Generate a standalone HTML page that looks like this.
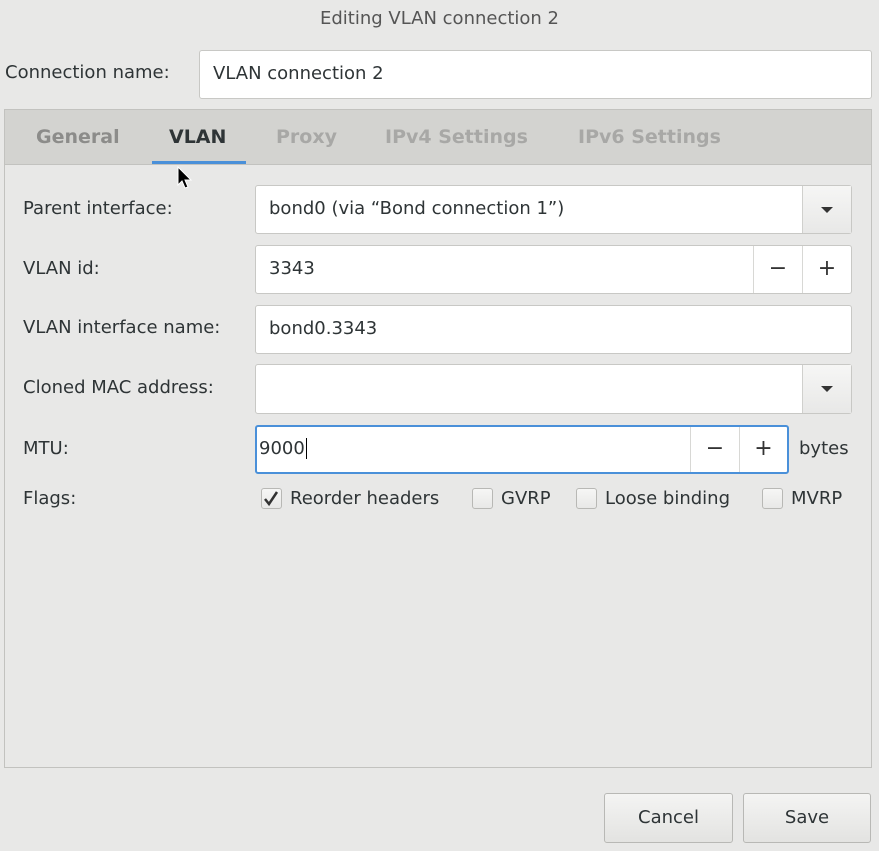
<!DOCTYPE html>
<html><head><style>
body{margin:0;width:879px;height:851px;background:#e8e8e7;font-family:"DejaVu Sans","Liberation Sans",sans-serif;font-size:18px;color:#2e3436;position:relative;overflow:hidden}
.a{position:absolute}
.t{position:absolute;white-space:nowrap;line-height:20px}
.e{position:absolute;background:#fff;border:1px solid #c8c8c5;border-radius:3px;box-sizing:border-box}
.btn{position:absolute;border-left:1px solid #d8d8d5;box-sizing:border-box;text-align:center;font-size:22px;color:#333}
.cb{position:absolute;width:21px;height:21px;border:1px solid #b8b8b5;border-radius:3px;background:linear-gradient(#f6f6f5,#e8e8e7);box-sizing:border-box}
.pb{position:absolute;border:1px solid #b8b8b5;border-radius:3px;background:linear-gradient(#f4f4f3,#e3e3e1);box-sizing:border-box;text-align:center;line-height:48px;font-size:18px}
.tab{position:absolute;white-space:nowrap;line-height:20px;font-weight:bold;font-size:19px}
</style></head><body>
<div class="t" style="left:0;width:879px;text-align:center;top:9px;color:#555">Editing VLAN connection 2</div>
<div class="t" style="left:5px;top:63px">Connection name:</div>
<div class="e" style="left:199px;top:50px;width:673px;height:49px"><div class="t" style="left:13px;top:13px">VLAN connection 2</div></div>
<div class="a" style="left:4px;top:109px;width:868px;height:659px;border:1px solid #c2c2bf;box-sizing:border-box;background:#e8e8e7"></div>
<div class="a" style="left:5px;top:110px;width:866px;height:54px;background:#d3d3d0;border-bottom:1px solid #c2c2bf"></div>
<div class="tab" style="left:36px;top:127px;color:#8c8c8a">General</div>
<div class="tab" style="left:169px;top:127px;color:#2e3436">VLAN</div>
<div class="tab" style="left:276px;top:127px;color:#a8a8a6">Proxy</div>
<div class="tab" style="left:385px;top:127px;color:#a8a8a6">IPv4 Settings</div>
<div class="tab" style="left:578px;top:127px;color:#a8a8a6">IPv6 Settings</div>
<div class="a" style="left:152px;top:161px;width:94px;height:3px;background:#4a90d9"></div>
<svg class="a" style="left:176px;top:166px" width="18" height="26" viewBox="0 0 18 26"><path d="M2 1 L2 19 L6 15 L9 22 L12 21 L9 14 L15 14 Z" fill="#000" stroke="#fff" stroke-width="1"/></svg>

<div class="t" style="left:23px;top:199px">Parent interface:</div>
<div class="e" style="left:255px;top:185px;width:597px;height:49px"><div class="t" style="left:13px;top:13px">bond0 (via “Bond connection 1”)</div>
<div class="a" style="right:0;top:0;width:48px;height:47px;border-left:1px solid #d0d0cd;background:linear-gradient(#f6f6f5,#e8e8e7)"><svg class="a" style="left:18px;top:20px" width="12" height="8"><path d="M0 1 L12 1 L6 7Z" fill="#333"/></svg></div></div>

<div class="t" style="left:23px;top:259px">VLAN id:</div>
<div class="e" style="left:255px;top:245px;width:597px;height:49px"><div class="t" style="left:13px;top:13px">3343</div>
<div class="btn" style="left:497px;top:0;width:49px;height:47px;line-height:46px">−</div>
<div class="btn" style="left:546px;top:0;width:49px;height:47px;line-height:46px">+</div></div>

<div class="t" style="left:23px;top:318px">VLAN interface name:</div>
<div class="e" style="left:255px;top:305px;width:597px;height:49px"><div class="t" style="left:13px;top:13px">bond0.3343</div></div>

<div class="t" style="left:23px;top:378px">Cloned MAC address:</div>
<div class="e" style="left:255px;top:364px;width:597px;height:50px">
<div class="a" style="right:0;top:0;width:48px;height:48px;border-left:1px solid #d0d0cd;background:linear-gradient(#f6f6f5,#e8e8e7)"><svg class="a" style="left:18px;top:20px" width="12" height="8"><path d="M0 1 L12 1 L6 7Z" fill="#333"/></svg></div></div>

<div class="t" style="left:23px;top:439px">MTU:</div>
<div class="e" style="left:255px;top:425px;width:534px;height:49px;border:2px solid #4a90d9"><div class="t" style="left:2px;top:12px">9000<span style="border-left:1px solid #000;margin-left:1px"></span></div>
<div class="btn" style="left:433px;top:0;width:49px;height:45px;line-height:44px">−</div>
<div class="btn" style="left:482px;top:0;width:48px;height:45px;line-height:44px">+</div></div>
<div class="t" style="left:799px;top:439px">bytes</div>

<div class="t" style="left:23px;top:489px">Flags:</div>
<div class="cb" style="left:261px;top:488px"><svg width="19" height="19"><path d="M3 10 L7 15 L15 3" fill="none" stroke="#333" stroke-width="2.5"/></svg></div>
<div class="t" style="left:290px;top:489px">Reorder headers</div>
<div class="cb" style="left:472px;top:488px"></div>
<div class="t" style="left:501px;top:489px">GVRP</div>
<div class="cb" style="left:576px;top:488px"></div>
<div class="t" style="left:605px;top:489px">Loose binding</div>
<div class="cb" style="left:762px;top:488px"></div>
<div class="t" style="left:791px;top:489px">MVRP</div>

<div class="pb" style="left:604px;top:793px;width:129px;height:50px">Cancel</div>
<div class="pb" style="left:743px;top:793px;width:128px;height:50px">Save</div>
</body></html>
